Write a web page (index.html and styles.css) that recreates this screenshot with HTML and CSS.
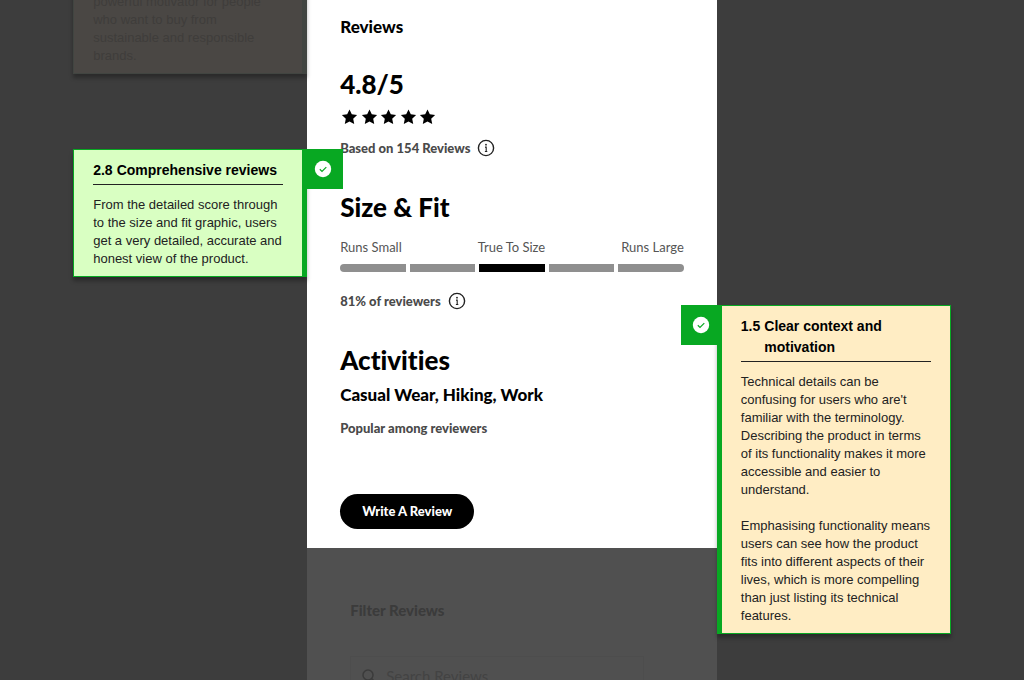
FILE: index.html
```html
<!DOCTYPE html>
<html lang="en">
<head>
    <meta charset="UTF-8">
    <meta name="viewport" content="width=device-width, initial-scale=1.0">
    <title>Reviews</title>
    <link rel="stylesheet" href="styles.css">
</head>
<body>

    <!-- Shared icons -->
    <svg class="sprite" aria-hidden="true">
        <symbol id="star" viewBox="0 0 16 16">
            <path d="M8 .4l2.3 4.9 5.3.7-3.9 3.7 1 5.4L8 12.5l-4.7 2.6 1-5.4L.4 6l5.3-.7z"/>
        </symbol>
        <symbol id="info" viewBox="0 0 18 18">
            <circle cx="9" cy="9" r="7.6" fill="none" stroke="currentColor" stroke-width="1.4"/>
            <circle cx="9" cy="5.7" r=".9" fill="currentColor"/>
            <path d="M8 8.1h1.2v4.4M7.9 12.5h2.4" fill="none" stroke="currentColor" stroke-width="1.1"/>
        </symbol>
        <symbol id="check" viewBox="0 0 18 18">
            <circle cx="9" cy="9" r="8.2" fill="#fff"/>
            <path d="M5.8 9.3l2.2 2.1 4.3-4.3" fill="none" stroke="currentColor" stroke-width="1.2"/>
        </symbol>
    </svg>

    <div class="canvas">
        <aside class="side side-left">
            <div class="note note-left note-dim">
                <p>powerful motivator for people who want to buy from sustainable and responsible brands.</p>
            </div>
            <div class="note note-left note-green">
                <span class="badge"><svg><use href="#check"/></svg></span>
                <h3><span>2.8</span><span>Comprehensive reviews</span></h3>
                <p>From the detailed score through to the size and fit graphic, users get a very detailed, accurate and honest view of the product.</p>
            </div>
        </aside>

        <main class="product">
            <section class="reviews">
                <h1>Reviews</h1>

                <h2>4.8/5</h2>
                <div class="stars">
                    <svg><use href="#star"/></svg>
                    <svg><use href="#star"/></svg>
                    <svg><use href="#star"/></svg>
                    <svg><use href="#star"/></svg>
                    <svg><use href="#star"/></svg>
                </div>
                <div class="meta">
                    <span>Based on 154 Reviews</span>
                    <button class="info" aria-label="About the score"><svg><use href="#info"/></svg></button>
                </div>

                <h2 class="spaced">Size &amp; Fit</h2>
                <div class="fit-labels">
                    <span>Runs Small</span>
                    <span>True To Size</span>
                    <span>Runs Large</span>
                </div>
                <div class="fit-bar">
                    <i></i><i></i><i class="active"></i><i></i><i></i>
                </div>
                <div class="meta">
                    <span>81% of reviewers</span>
                    <button class="info" aria-label="About the fit"><svg><use href="#info"/></svg></button>
                </div>

                <h2 class="spaced">Activities</h2>
                <p class="activities">Casual Wear, Hiking, Work</p>
                <div class="meta">Popular among reviewers</div>

                <button class="write">Write A Review</button>
            </section>

            <section class="filter">
                <h2 class="filter-title">Filter Reviews</h2>
                <label class="search">
                    <svg viewBox="0 0 16 16"><circle cx="7" cy="7" r="5"/><path d="M10.6 10.6l4 4"/></svg>
                    <input type="search" placeholder="Search Reviews" aria-label="Search Reviews">
                </label>
            </section>
        </main>

        <aside class="side side-right">
            <div class="note note-right note-yellow">
                <span class="badge"><svg><use href="#check"/></svg></span>
                <h3><span>1.5</span><span>Clear context and motivation</span></h3>
                <p>Technical details can be confusing for users who are't familiar with the terminology. Describing the product in terms of its functionality makes it more accessible and easier to understand.</p>
                <p>Emphasising functionality means users can see how the product fits into different aspects of their lives, which is more compelling than just listing its technical features.</p>
            </div>
        </aside>
    </div>

</body>
</html>
```
FILE: styles.css
```css
* {
    box-sizing: border-box;
    margin: 0;
    padding: 0;
}

body {
    background: #3d3d3d;
    color: #000;
    font-family: Lato, sans-serif;
    font-variant-ligatures: none;
    overflow: hidden;
}

button {
    border: none;
    background: none;
    font-family: inherit;
    cursor: pointer;
}

.sprite {
    display: none;
}

.canvas {
    display: grid;
    grid-template-columns: 3fr 4fr 3fr;
    min-height: 100vh;
}

/* Annotation notes */
.side {
    display: flex;
    flex-direction: column;
    gap: 75px;
}

.side-left {
    align-items: flex-end;
}

.side-right {
    align-items: flex-start;
    padding-top: 305px;
}

.note {
    position: relative;
    width: 234px;
    padding: 10px 19px 8px;
    border: 1px solid #08a822;
    font-family: "Liberation Sans", Arial, sans-serif;
    font-size: 13px;
    line-height: 18px;
    color: #222;
    box-shadow: 0 4px 4px rgba(0, 0, 0, 0.3);
}

.note-left {
    border-right-width: 5px;
}

.note-right {
    border-left-width: 5px;
}

.note-green {
    background: #d9ffc2;
}

.note-yellow {
    background: #ffedc4;
}

/* Runs off the top edge */
.note-dim {
    margin-top: -8px;
    padding-top: 0;
    background: #4a4744;
    border-color: #414541;
    color: #3f3d3b;
}

.note h3 {
    display: flex;
    gap: 4px;
    padding-bottom: 3px;
    margin-bottom: 11px;
    border-bottom: 1px solid #222;
    font-size: 14px;
    line-height: 21px;
    color: #000;
}

.note p + p {
    margin-top: 18px;
}

.badge {
    position: absolute;
    top: -1px;
    display: flex;
    align-items: center;
    justify-content: center;
    width: 41px;
    height: 40px;
    background: #08a822;
    color: #08a822;
}

.badge svg {
    width: 18px;
    height: 18px;
}

.note-left .badge {
    left: 100%;
}

.note-right .badge {
    right: 100%;
}

/* Product page */
.product {
    display: flex;
    flex-direction: column;
    height: 100vh;
}

.reviews {
    padding: 17px 33px 19px;
    background: #fff;
}

h1 {
    margin-bottom: 31px;
    font-size: 17px;
    line-height: 20px;
    font-weight: 900;
}

h2 {
    font-size: 26px;
    line-height: 32px;
    font-weight: 900;
}

.spaced {
    margin-top: 33px;
}

.stars {
    display: flex;
    justify-content: space-between;
    width: 95px;
    margin: 9px 0 13px 1px;
}

.stars svg {
    width: 17px;
    height: 16px;
}

.meta {
    display: flex;
    align-items: center;
    gap: 7px;
    font-size: 13px;
    line-height: 20px;
    font-weight: 900;
    color: #4a4a4a;
}

.info {
    display: flex;
    color: #222;
}

.info svg {
    width: 18px;
    height: 18px;
}

.fit-labels {
    display: flex;
    justify-content: space-between;
    margin-top: 14px;
    font-size: 13px;
    line-height: 20px;
    color: #555;
}

.fit-bar {
    display: flex;
    gap: 4px;
    margin: 7px 0 19px;
    border-radius: 4px;
    overflow: hidden;
}

.fit-bar i {
    flex: 1;
    height: 8px;
    background: #8f8f8f;
}

.fit-bar .active {
    background: #000;
}

.activities {
    margin: 7px 0 11px;
    font-size: 17px;
    line-height: 24px;
    font-weight: 900;
}

.write {
    margin-top: 56px;
    padding: 0 22px;
    border-radius: 18px;
    background: #000;
    color: #fff;
    font-size: 13px;
    line-height: 35px;
    font-weight: 900;
}

/* Dimmed part of the page */
.filter {
    flex: 1;
    padding: 52px 73px 0 43px;
    background: #505050;
}

.filter-title {
    font-size: 15px;
    line-height: 20px;
    color: #3b3b3b;
}

.search {
    display: flex;
    align-items: center;
    gap: 9px;
    height: 40px;
    margin-top: 36px;
    padding: 0 10px;
    border: 1px solid #4d4d4d;
}

.search svg {
    width: 16px;
    height: 16px;
    fill: none;
    stroke: #3b3b3b;
    stroke-width: 1.5;
}

.search input {
    flex: 1;
    min-width: 0;
    border: none;
    background: none;
    font-family: inherit;
    font-size: 15px;
}

.search input::placeholder {
    color: #434343;
}
```
